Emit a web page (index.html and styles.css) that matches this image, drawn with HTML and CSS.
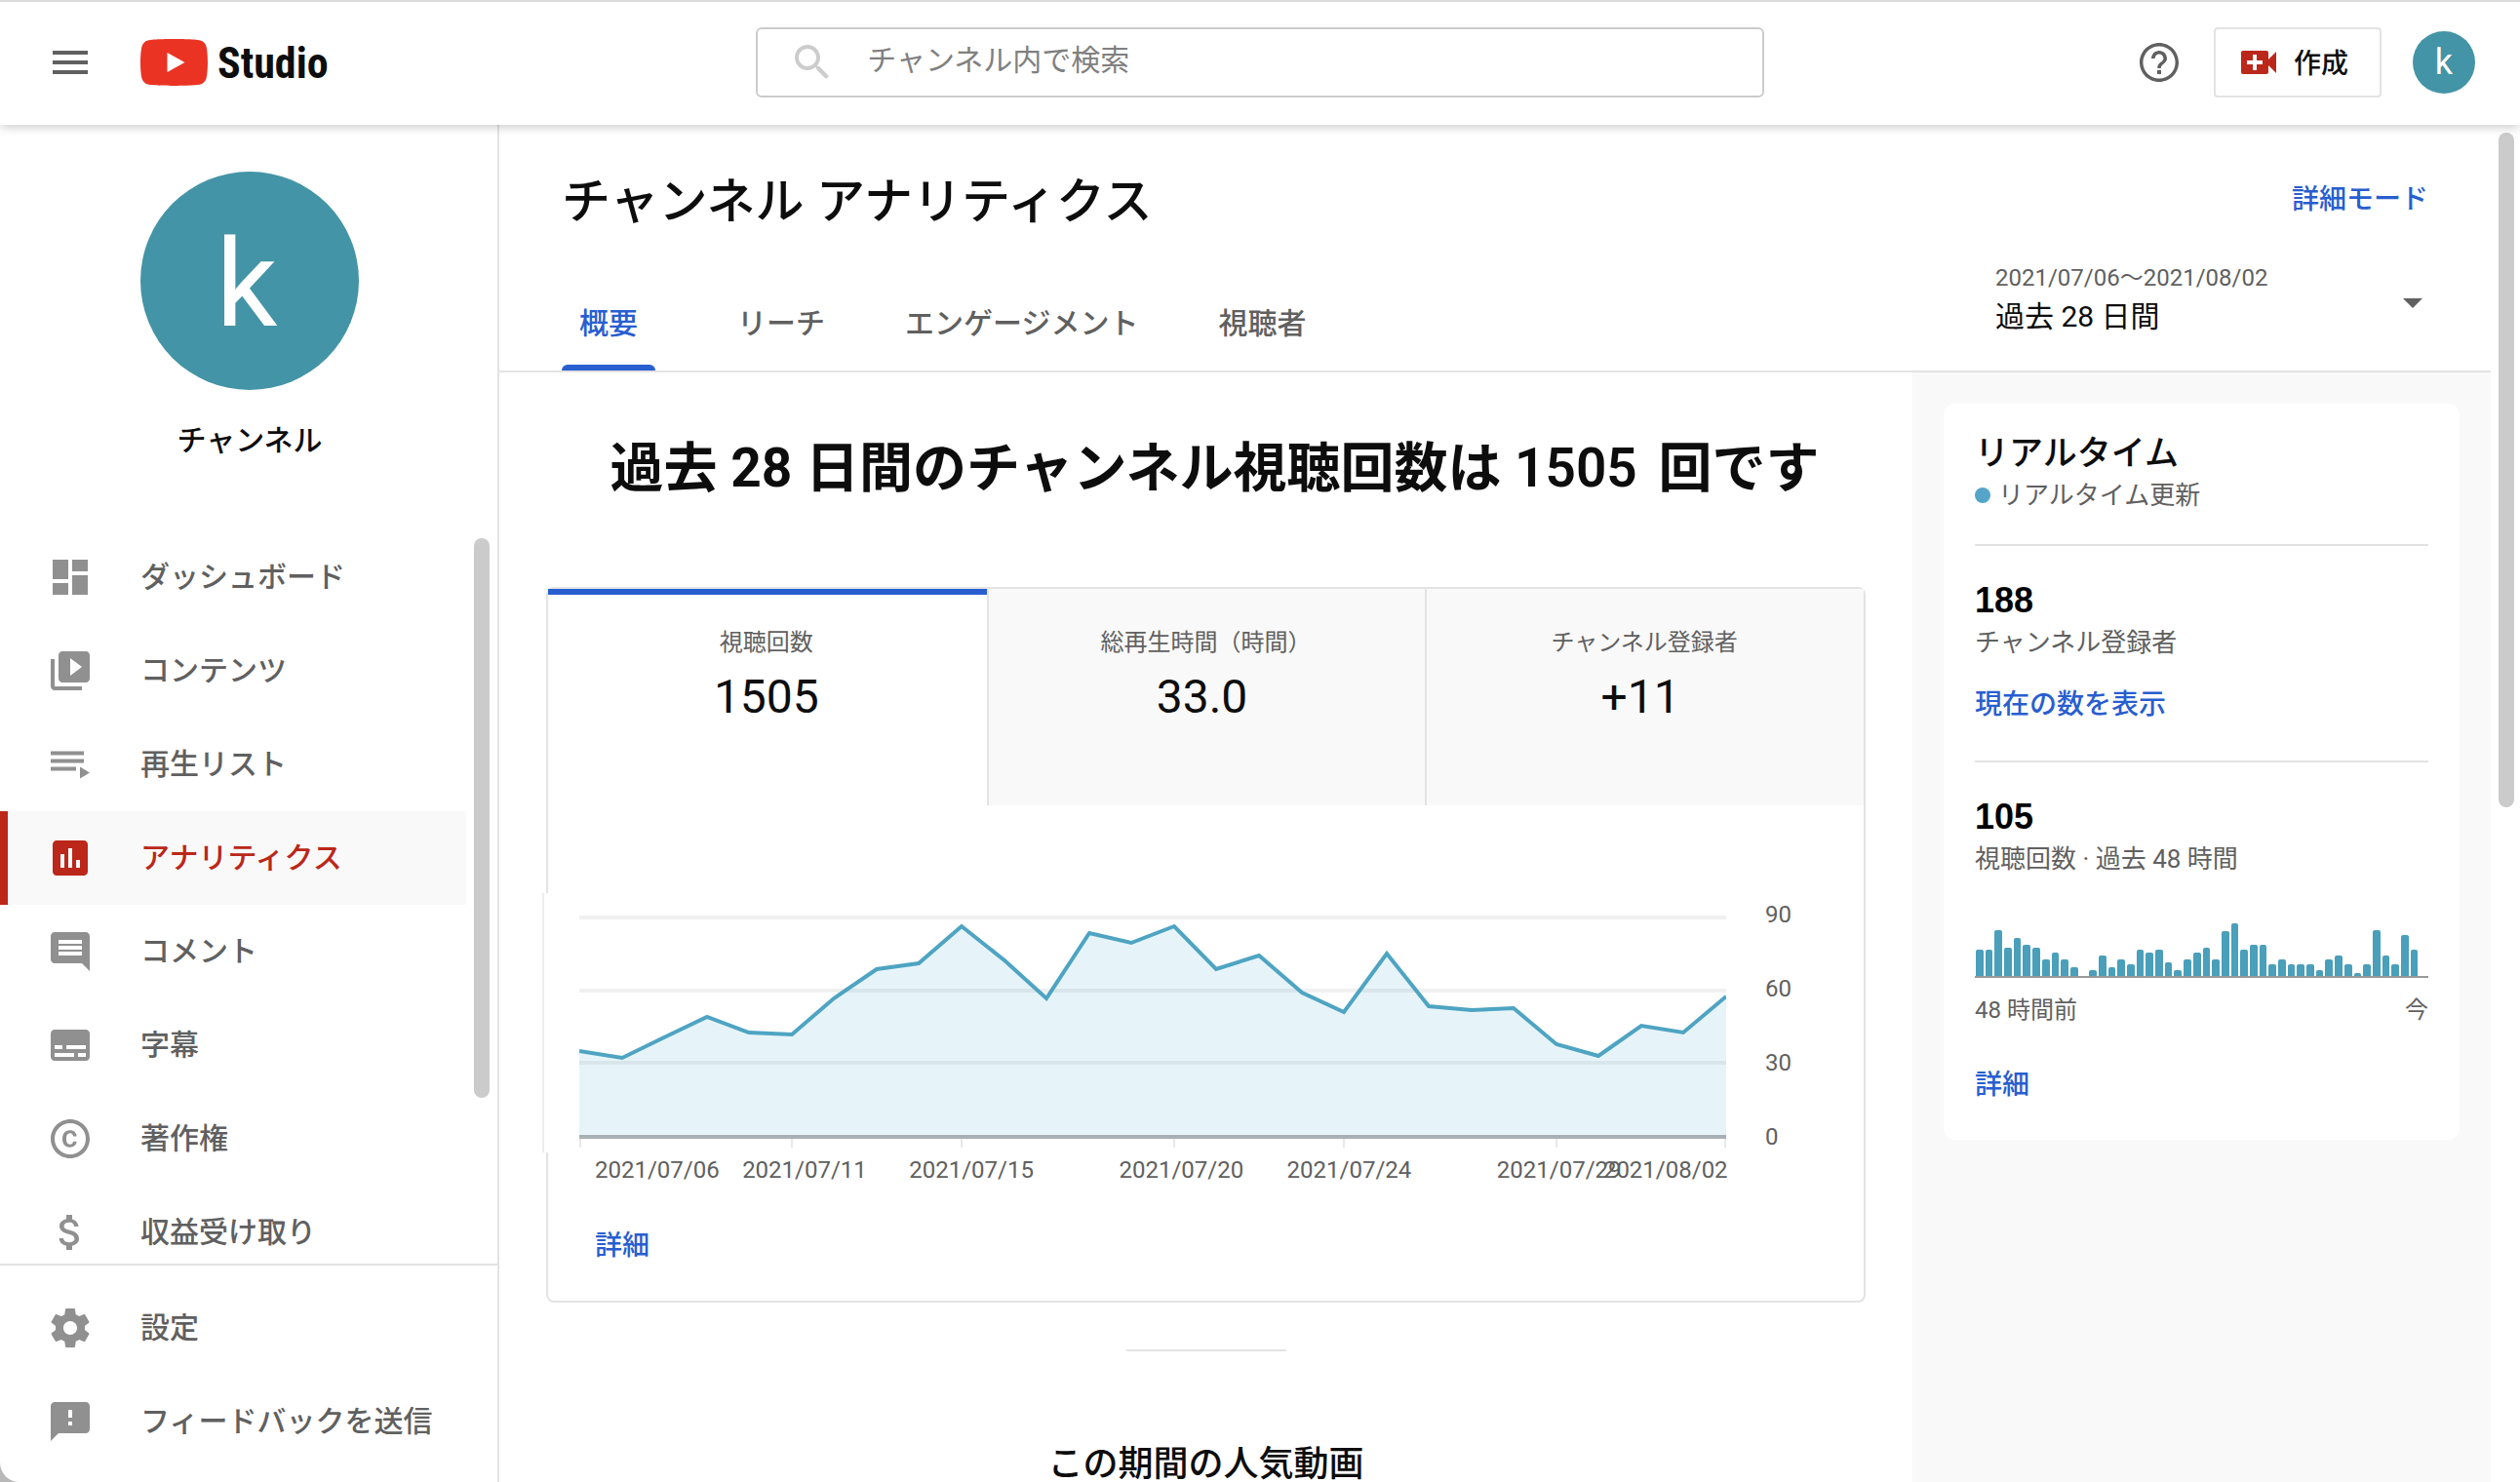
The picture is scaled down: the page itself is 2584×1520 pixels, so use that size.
FILE: index.html
```html
<!DOCTYPE html>
<html lang="ja">
<head>
<meta charset="utf-8">
<meta name="viewport" content="width=device-width, initial-scale=1">
<title>チャンネル アナリティクス - YouTube Studio</title>
<link rel="stylesheet" href="styles.css">
</head>
<body>
<div class="app">
  <header class="topbar">
    <div class="topbar-start">
      <button class="icon-button" type="button" aria-label="メニュー">
        <svg class="icon icon-dark" viewBox="0 0 24 24"><path d="M3 18h18v-2H3v2zm0-5h18v-2H3v2zm0-7v2h18V6H3z"/></svg>
      </button>
      <a class="brand" href="#">
        <svg class="brand-mark" viewBox="0 0 69 48"><path fill="#ea3323" d="M67.500 7.500C66.700 4.500 64.400 2.200 61.500 1.400 56.100 0 34.500 0 34.500 0S12.900 0 7.500 1.400C4.600 2.200 2.300 4.500 1.500 7.500 0 12.900 0 24 0 24s0 11.100 1.500 16.500c.8 3 3.100 5.300 6 6.100C12.900 48 34.500 48 34.500 48s21.600 0 27-1.400c2.900-.8 5.200-3.100 6-6.100C69 35.100 69 24 69 24s0-11.100-1.500-16.500z"/><path fill="#fff" d="M27.500 14v20L45.500 24z"/></svg>
        <span class="brand-name">Studio</span>
      </a>
    </div>
    <form class="search" role="search">
      <svg class="icon icon-pale" viewBox="0 0 24 24"><path d="M15.500 14h-.79l-.28-.27C15.410 12.590 16 11.110 16 9.500 16 5.910 13.090 3 9.500 3S3 5.910 3 9.500 5.910 16 9.500 16c1.610 0 3.090-.59 4.230-1.570l.27.28v.79l5 4.990L20.490 19l-4.990-5zm-6 0C7.010 14 5 11.990 5 9.500S7.010 5 9.500 5 14 7.010 14 9.500 11.990 14 9.500 14z"/></svg>
      <input class="search-input" type="search" placeholder="チャンネル内で検索" aria-label="チャンネル内で検索">
    </form>
    <div class="topbar-end">
      <button class="icon-button" type="button" aria-label="ヘルプ">
        <svg class="icon icon-dark" viewBox="0 0 24 24"><path d="M11 18h2v-2h-2v2zm1-16C6.480 2 2 6.480 2 12s4.480 10 10 10 10-4.480 10-10S17.520 2 12 2zm0 18.300c-4.600 0-8.300-3.700-8.300-8.300S7.400 3.700 12 3.700s8.300 3.700 8.300 8.300-3.700 8.300-8.300 8.300zM12 6c-2.210 0-4 1.790-4 4h1.800c0-1.200 1-2.200 2.200-2.200s2.200 1 2.200 2.200c0 2-3.100 1.750-3.100 5h1.800c0-2.250 3.100-2.500 3.100-5 0-2.210-1.790-4-4-4z"/></svg>
      </button>
      <button class="create" type="button">
        <svg class="icon icon-red" viewBox="0 0 24 24"><path d="M17 10.500V7c0-.55-.45-1-1-1H4c-.55 0-1 .45-1 1v10c0 .55.45 1 1 1h12c.55 0 1-.45 1-1v-3.500l4 4v-11l-4 4zM14 13h-3v3H9v-3H6v-2h3V8h2v3h3v2z"/></svg>
        <span class="create-label">作成</span>
      </button>
      <button class="avatar avatar-small" type="button" aria-label="アカウント">k</button>
    </div>
  </header>

  <aside class="sidebar">
    <div class="channel">
      <div class="avatar avatar-large">k</div>
      <p class="channel-name">チャンネル</p>
    </div>
    <nav class="nav" aria-label="メニュー">
      <a class="nav-item" href="#"><svg class="icon" viewBox="0 0 24 24"><path d="M3 13h8V3H3v10zm0 8h8v-6H3v6zm10 0h8V11h-8v10zm0-18v6h8V3h-8z"/></svg><span>ダッシュボード</span></a>
      <a class="nav-item" href="#"><svg class="icon" viewBox="0 0 24 24"><path d="M4 6H2v14c0 1.100.9 2 2 2h14v-2H4V6zm16-4H8c-1.100 0-2 .9-2 2v12c0 1.100.9 2 2 2h12c1.100 0 2-.9 2-2V4c0-1.100-.9-2-2-2zm-8 12.500v-9l6 4.500-6 4.500z"/></svg><span>コンテンツ</span></a>
      <a class="nav-item" href="#"><svg class="icon" viewBox="0 0 24 24"><path d="M2 5.300h17v2H2zM2 9.300h17v2H2zM2 13.300h13v2H2zM17 13.300v6l5-3z"/></svg><span>再生リスト</span></a>
      <a class="nav-item nav-item-active" href="#" aria-current="page"><svg class="icon" viewBox="0 0 24 24"><path d="M19 3H5c-1.100 0-2 .9-2 2v14c0 1.100.9 2 2 2h14c1.100 0 2-.9 2-2V5c0-1.100-.9-2-2-2zM9 17H7v-7h2v7zm4 0h-2V7h2v10zm4 0h-2v-4h2v4z"/></svg><span>アナリティクス</span></a>
      <a class="nav-item" href="#"><svg class="icon" viewBox="0 0 24 24"><path d="M21.990 4c0-1.100-.89-2-1.990-2H4c-1.100 0-2 .9-2 2v12c0 1.100.9 2 2 2h14l4 4-.01-18zM18 14H6v-2h12v2zm0-3H6V9h12v2zm0-3H6V6h12v2z"/></svg><span>コメント</span></a>
      <a class="nav-item" href="#"><svg class="icon" viewBox="0 0 24 24"><path d="M20 4H4c-1.100 0-2 .9-2 2v12c0 1.100.9 2 2 2h16c1.100 0 2-.9 2-2V6c0-1.100-.9-2-2-2zM4 12h4v2H4v-2zm10 6H4v-2h10v2zm6 0h-4v-2h4v2zm0-4H10v-2h10v2z"/></svg><span>字幕</span></a>
      <a class="nav-item" href="#"><svg class="icon" viewBox="0 0 24 24"><path d="M10.080 10.860c.05-.33.160-.62.3-.87s.340-.46.590-.62c.24-.15.540-.22.910-.23.23.01.440.05.630.13.200.09.380.21.520.36s.25.33.34.53.130.42.140.64h1.790c-.02-.47-.11-.9-.28-1.290s-.4-.73-.7-1.010-.66-.5-1.080-.66-.88-.23-1.390-.23c-.65 0-1.220.11-1.700.34s-.88.53-1.200.92-.56.84-.71 1.360S8 11.290 8 11.870v.27c0 .58.080 1.120.23 1.640s.390.970.710 1.350.720.690 1.200.910c.48.220 1.050.34 1.700.34.470 0 .91-.08 1.320-.23s.770-.36 1.080-.63.560-.58.740-.94.290-.74.300-1.150h-1.790c-.01.21-.06.4-.15.580s-.21.330-.36.460-.32.230-.52.300c-.19.070-.39.090-.6.100-.36-.01-.66-.08-.89-.23-.25-.16-.45-.37-.59-.62s-.25-.55-.3-.88-.08-.67-.08-1v-.27c0-.35.030-.68.080-1.010zM12 2C6.480 2 2 6.480 2 12s4.480 10 10 10 10-4.480 10-10S17.520 2 12 2zm0 18c-4.410 0-8-3.590-8-8s3.590-8 8-8 8 3.590 8 8-3.590 8-8 8z"/></svg><span>著作権</span></a>
      <a class="nav-item" href="#"><svg class="icon" viewBox="0 0 24 24"><path d="M11.800 10.900c-2.270-.59-3-1.200-3-2.150 0-1.090 1.010-1.850 2.700-1.850 1.780 0 2.440.85 2.500 2.100h2.210c-.07-1.720-1.120-3.300-3.210-3.810V3h-3v2.160c-1.940.42-3.500 1.680-3.500 3.610 0 2.310 1.910 3.460 4.700 4.130 2.500.6 3 1.480 3 2.410 0 .69-.49 1.790-2.700 1.790-2.060 0-2.870-.92-2.980-2.100h-2.200c.12 2.190 1.760 3.420 3.680 3.830V21h3v-2.150c1.950-.37 3.500-1.500 3.500-3.550 0-2.840-2.430-3.810-4.700-4.400z"/></svg><span>収益受け取り</span></a>
    </nav>
    <nav class="nav-footer" aria-label="その他">
      <a class="nav-item" href="#"><svg class="icon" viewBox="0 0 24 24"><path d="M19.430 12.980c.04-.32.070-.64.070-.98s-.03-.66-.07-.98l2.110-1.650c.19-.15.240-.42.120-.64l-2-3.460c-.12-.22-.39-.3-.61-.22l-2.490 1c-.52-.4-1.080-.73-1.690-.98l-.38-2.650C14.460 2.180 14.250 2 14 2h-4c-.25 0-.46.18-.49.42l-.38 2.650c-.61.25-1.170.59-1.690.98l-2.490-1c-.23-.09-.49 0-.61.22l-2 3.460c-.13.22-.07.490.12.640l2.110 1.650c-.04.320-.07.650-.07.980s.03.660.07.980l-2.110 1.650c-.19.150-.24.420-.12.640l2 3.460c.12.220.39.300.61.220l2.490-1c.52.400 1.080.73 1.690.98l.38 2.650c.03.240.24.420.49.420h4c.25 0 .46-.18.490-.42l.38-2.650c.61-.25 1.170-.59 1.690-.98l2.490 1c.23.090.49 0 .61-.22l2-3.460c.12-.22.070-.49-.12-.64l-2.110-1.650zM12 15.500c-1.930 0-3.500-1.570-3.500-3.500s1.570-3.500 3.500-3.500 3.500 1.570 3.500 3.500-1.570 3.500-3.500 3.500z"/></svg><span>設定</span></a>
      <a class="nav-item" href="#"><svg class="icon" viewBox="0 0 24 24"><path d="M20 2H4c-1.100 0-1.990.9-1.990 2L2 22l4-4h14c1.100 0 2-.9 2-2V4c0-1.100-.9-2-2-2zm-7 12h-2v-2h2v2zm0-4h-2V6h2v4z"/></svg><span>フィードバックを送信</span></a>
    </nav>
    <span class="scroll-thumb scroll-thumb-nav"></span>
  </aside>

  <main class="page">
    <div class="page-head">
      <div class="page-head-main">
        <h1 class="page-title">チャンネル アナリティクス</h1>
        <div class="tabs" role="tablist">
          <button class="tab tab-active" type="button" role="tab" aria-selected="true">概要</button>
          <button class="tab" type="button" role="tab">リーチ</button>
          <button class="tab" type="button" role="tab">エンゲージメント</button>
          <button class="tab" type="button" role="tab">視聴者</button>
        </div>
      </div>
      <div class="page-head-side">
        <a class="link mode-link" href="#">詳細モード</a>
        <button class="period" type="button" aria-haspopup="listbox">
          <span class="period-text">
            <span class="period-dates">2021/07/06～2021/08/02</span>
            <span class="period-name">過去 28 日間</span>
          </span>
          <svg class="icon icon-dark period-arrow" viewBox="0 0 24 24"><path d="M7 10l5 5 5-5z"/></svg>
        </button>
      </div>
    </div>

    <div class="page-body">
      <section class="overview">
        <h2 class="headline">過去 28 日間のチャンネル視聴回数は <span class="headline-count">1505</span> 回です</h2>

        <div class="chart-card">
          <div class="metrics" role="tablist">
            <button class="metric metric-active" type="button" role="tab" aria-selected="true">
              <span class="metric-label">視聴回数</span>
              <span class="metric-value">1505</span>
            </button>
            <button class="metric" type="button" role="tab">
              <span class="metric-label">総再生時間（時間）</span>
              <span class="metric-value metric-value-trend">33.0</span>
            </button>
            <button class="metric" type="button" role="tab">
              <span class="metric-label">チャンネル登録者</span>
              <span class="metric-value metric-value-trend">+11</span>
            </button>
          </div>

          <div class="plot">
            <svg class="plot-area" viewBox="0 0 1176 253" preserveAspectRatio="none" role="img" aria-label="視聴回数の推移">
              <path class="plot-fill" d="M0 240V152L44 159 87 138 131 117 174 133 218 135 261 98 305 68 348 62 392 24 436 59 479 98 523 31 566 41 610 24 653 68 697 54 741 92 784 112 828 52 871 106 915 110 958 108 1002 145 1045 157 1089 126 1132 133 1176 96V240z"/>
              <path class="plot-grid" d="M0 15H1176M0 90H1176M0 164H1176"/>
              <path class="plot-tick" d="M1 241V251M218 241V251M392 241V251M610 241V251M784 241V251M1002 241V251M1175 241V251"/>
              <path class="plot-base" d="M0 240H1176"/>
              <path class="plot-line" d="M0 152L44 159 87 138 131 117 174 133 218 135 261 98 305 68 348 62 392 24 436 59 479 98 523 31 566 41 610 24 653 68 697 54 741 92 784 112 828 52 871 106 915 110 958 108 1002 145 1045 157 1089 126 1132 133 1176 96"/>
            </svg>
            <div class="plot-scale"><span>90</span><span>60</span><span>30</span><span>0</span></div>
          </div>
          <div class="plot-dates">
            <span>2021/07/06</span><span>2021/07/11</span><span>2021/07/15</span><span>2021/07/20</span><span>2021/07/24</span><span>2021/07/29</span><span>2021/08/02</span>
          </div>
          <a class="link card-link" href="#">詳細</a>
        </div>

        <hr class="section-rule">
        <h2 class="section-title">この期間の人気動画</h2>
      </section>

      <aside class="side">
        <section class="realtime">
          <h2 class="realtime-title">リアルタイム</h2>
          <p class="realtime-status">リアルタイム更新</p>
          <div class="realtime-block">
            <strong class="realtime-number">188</strong>
            <p class="realtime-label">チャンネル登録者</p>
            <a class="link" href="#">現在の数を表示</a>
          </div>
          <div class="realtime-block">
            <strong class="realtime-number">105</strong>
            <p class="realtime-label">視聴回数 · 過去 48 時間</p>
            <div class="bars" role="img" aria-label="過去 48 時間の視聴回数">
              <i style="height:27px"></i><i style="height:27px"></i><i style="height:47px"></i><i style="height:29px"></i><i style="height:39px"></i><i style="height:32px"></i><i style="height:29px"></i><i style="height:17px"></i><i style="height:24px"></i><i style="height:17px"></i><i style="height:9px"></i><i style="height:0px"></i><i style="height:6px"></i><i style="height:21px"></i><i style="height:9px"></i><i style="height:17px"></i><i style="height:12px"></i><i style="height:27px"></i><i style="height:24px"></i><i style="height:27px"></i><i style="height:14px"></i><i style="height:6px"></i><i style="height:17px"></i><i style="height:24px"></i><i style="height:29px"></i><i style="height:17px"></i><i style="height:46px"></i><i style="height:54px"></i><i style="height:27px"></i><i style="height:32px"></i><i style="height:32px"></i><i style="height:12px"></i><i style="height:17px"></i><i style="height:12px"></i><i style="height:12px"></i><i style="height:12px"></i><i style="height:6px"></i><i style="height:17px"></i><i style="height:21px"></i><i style="height:12px"></i><i style="height:3px"></i><i style="height:12px"></i><i style="height:47px"></i><i style="height:21px"></i><i style="height:12px"></i><i style="height:42px"></i><i style="height:27px"></i><i style="height:0px"></i>
            </div>
            <div class="bars-range"><span>48 時間前</span><span>今</span></div>
            <a class="link" href="#">詳細</a>
          </div>
        </section>
      </aside>
    </div>
    <span class="scroll-thumb scroll-thumb-page"></span>
  </main>
</div>
</body>
</html>
```
FILE: styles.css
```css
:root {
  --ink: #0d0d0d;
  --ink-soft: #606060;
  --icon: #909090;
  --line: #e3e3e3;
  --panel: #f9f9f9;
  --blue: #285ecf;
  --red: #bb271a;
  --teal: #4394a6;
}

* {
  box-sizing: border-box;
}

html {
  background: #b8b8b8;
}

body {
  margin: 0;
  color: var(--ink);
  font-family: Roboto, "Noto Sans CJK JP", sans-serif;
  font-size: 28px;
  line-height: 40px;
}

h1,
h2,
p {
  margin: 0;
}

a {
  color: inherit;
  text-decoration: none;
}

button {
  margin: 0;
  padding: 0;
  border: 0;
  background: none;
  color: inherit;
  font: inherit;
  cursor: pointer;
}

.app {
  display: grid;
  grid-template: 128px minmax(0, 1fr) / 512px minmax(0, 1fr);
  height: 100vh;
  overflow: hidden;
  border-bottom-left-radius: 20px;
  background: #fff;
}

.icon {
  flex: none;
  width: 48px;
  height: 48px;
  fill: var(--icon);
}

.icon-dark {
  fill: var(--ink-soft);
}

.icon-pale {
  fill: #ccc;
}

.icon-red {
  fill: var(--red);
}

.link {
  color: var(--blue);
  font-weight: 500;
}

/* Top bar */

.topbar {
  z-index: 2;
  grid-column: 1 / -1;
  display: grid;
  grid-template-columns: 30% 40% 30%;
  align-items: center;
  background: #fff;
  box-shadow: inset 0 2px #dcdcdc, 0 2px 10px rgba(0, 0, 0, 0.22);
}

.topbar-start,
.topbar-end {
  display: flex;
  align-items: center;
}

.topbar-start {
  gap: 48px;
  padding-left: 48px;
}

.topbar-end {
  justify-content: flex-end;
  gap: 32px;
  padding-right: 46px;
}

.icon-button {
  display: flex;
}

.brand {
  display: flex;
  align-items: center;
  gap: 10px;
}

.brand-mark {
  width: 69px;
  height: 48px;
}

.brand-name {
  padding-top: 2px;
  font-family: "Roboto Condensed", "Liberation Sans Narrow", Roboto, sans-serif;
  font-size: 44px;
  font-weight: 700;
  line-height: 48px;
}

.search {
  display: flex;
  align-items: center;
  gap: 32px;
  height: 72px;
  padding: 0 32px;
  border: 2px solid #ccc;
  border-radius: 6px;
}

.search-input {
  flex: 1;
  min-width: 0;
  padding: 0 0 4px;
  border: 0;
  outline: 0;
  background: none;
  color: var(--ink);
  font: inherit;
  font-size: 30px;
}

.search-input::placeholder {
  color: #808080;
}

.create {
  display: flex;
  align-items: center;
  gap: 12px;
  height: 72px;
  padding: 0 32px 0 20px;
  border: 2px solid var(--line);
  border-radius: 4px;
  font-weight: 500;
}

.create-label {
  padding-top: 4px;
}

.avatar {
  display: flex;
  align-items: center;
  justify-content: center;
  border-radius: 50%;
  background: var(--teal);
  color: #fff;
}

.avatar-small {
  width: 64px;
  height: 64px;
  font-size: 36px;
}

.avatar-large {
  width: 224px;
  height: 224px;
  padding: 8px 6px 0 0;
  font-size: 124px;
}

/* Sidebar */

.sidebar {
  position: relative;
  display: flex;
  flex-direction: column;
  border-right: 2px solid var(--line);
  font-size: 30px;
}

.channel {
  display: flex;
  flex-direction: column;
  align-items: center;
  gap: 32px;
  padding: 48px 0 72px 2px;
}

.channel-name {
  font-weight: 500;
}

.nav {
  flex: 1;
  min-height: 0;
  overflow: hidden;
}

.nav-footer {
  padding: 16px 0 14px;
  border-top: 2px solid var(--line);
}

.nav-item {
  display: flex;
  align-items: center;
  gap: 48px;
  height: 96px;
  margin-right: 32px;
  padding-left: 48px;
  color: var(--ink-soft);
  font-weight: 500;
  white-space: nowrap;
}

.nav-item-active {
  padding-left: 40px;
  border-left: 8px solid var(--red);
  background: var(--panel);
  color: var(--red);
}

.nav-item-active .icon {
  fill: var(--red);
}

.scroll-thumb {
  position: absolute;
  width: 16px;
  border-radius: 8px;
  background: #cbcbcb;
}

.scroll-thumb-nav {
  top: 424px;
  right: 8px;
  height: 574px;
}

.scroll-thumb-page {
  top: 8px;
  right: 6px;
  height: 692px;
}

/* Page heading */

.page {
  position: relative;
  display: flex;
  flex-direction: column;
  min-height: 0;
  padding-right: 30px;
}

.page-head {
  display: flex;
  justify-content: space-between;
  padding: 0 64px;
  border-bottom: 2px solid var(--line);
}

.page-title {
  padding-top: 49px;
  font-size: 50px;
  font-weight: 500;
  line-height: 60px;
}

.tabs {
  display: flex;
  gap: 46px;
  padding-top: 43px;
}

.tab {
  height: 100px;
  padding: 4px 18px 0;
  color: var(--ink-soft);
  font-size: 30px;
  font-weight: 500;
}

.tab-active {
  position: relative;
  margin-right: 20px;
  color: var(--blue);
}

.tab-active::after {
  content: "";
  position: absolute;
  right: 0;
  bottom: 0;
  left: 0;
  height: 6px;
  border-radius: 6px 6px 0 0;
  background: var(--blue);
}

.page-head-side {
  display: flex;
  flex-direction: column;
  gap: 40px;
  width: 444px;
  padding-top: 57px;
}

.mode-link {
  align-self: flex-end;
}

.period {
  display: flex;
  align-items: center;
  justify-content: space-between;
  margin-right: -8px;
  text-align: left;
}

.period-text {
  display: flex;
  flex-direction: column;
}

.period-arrow {
  margin-top: 10px;
}

.period-dates {
  color: var(--ink-soft);
  font-size: 24px;
}

.period-name {
  font-size: 30px;
}

/* Overview */

.page-body {
  display: grid;
  flex: 1;
  grid-template-columns: minmax(0, 1fr) 593px;
  min-height: 0;
  overflow: hidden;
}

.overview {
  padding: 66px 48px 0;
}

.headline {
  margin-bottom: 90px;
  padding-left: 18px;
  font-size: 55px;
  font-weight: 700;
  line-height: 64px;
  text-align: center;
  white-space: nowrap;
}

.headline-count {
  margin-right: 8px;
  font-weight: 600;
}

.chart-card {
  border: 2px solid var(--line);
  border-radius: 8px;
}

.metrics {
  display: grid;
  grid-template-columns: repeat(3, minmax(0, 1fr));
}

.metric {
  display: flex;
  flex-direction: column;
  align-items: center;
  height: 222px;
  padding: 35px 2px 0 0;
  border-left: 2px solid var(--line);
  background: var(--panel);
}

.metric-active {
  padding-top: 29px;
  border-top: 6px solid var(--blue);
  border-left: 0;
  background: none;
}

.metric-label {
  color: var(--ink-soft);
  font-size: 24px;
}

.metric-value {
  padding-top: 6px;
  font-size: 48px;
  line-height: 60px;
}

.metric-value-trend {
  padding-right: 8px;
}

.plot {
  display: grid;
  grid-template-columns: minmax(0, 1fr) 101px;
  column-gap: 40px;
  height: 266px;
  margin: 90px 0 6px -6px;
  padding: 10px 0 0 36px;
  border-left: 2px solid #ececec;
  background: #fff;
}

.plot-area {
  width: 100%;
  height: 253px;
}

.plot-area path {
  fill: none;
  stroke-width: 4px;
  vector-effect: non-scaling-stroke;
}

.plot-area .plot-fill {
  fill: #e6f4f9;
}

.plot-grid {
  stroke: rgba(0, 0, 0, 0.06);
}

.plot-area .plot-tick {
  stroke: #e8e8e8;
  stroke-width: 2px;
}

.plot-base {
  stroke: #a9b0b3;
}

.plot-line {
  stroke: #4ea4c2;
}

.plot-scale {
  display: flex;
  flex-direction: column;
  justify-content: space-between;
  height: 252px;
  color: var(--ink-soft);
  font-size: 24px;
  line-height: 24px;
}

.plot-dates {
  display: grid;
  grid-template-columns: minmax(0, 151fr) minmax(0, 171fr) minmax(0, 215fr) minmax(0, 172fr) minmax(0, 215fr) minmax(0, 109fr) minmax(0, 126fr);
  padding: 0 141px 0 48px;
  color: var(--ink-soft);
  font-size: 24px;
  line-height: 24px;
  white-space: nowrap;
}

.card-link {
  display: block;
  margin: 46px 48px 36px;
}

.section-rule {
  width: 164px;
  height: 2px;
  margin: 48px auto 92px;
  border: 0;
  background: var(--line);
}

.section-title {
  font-size: 36px;
  font-weight: 500;
  line-height: 48px;
  text-align: center;
}

/* Realtime */

.side {
  padding: 32px;
  background: var(--panel);
}

.realtime {
  padding: 30px 32px 36px;
  border-radius: 12px;
  background: #fff;
}

.realtime-title {
  font-size: 35px;
  font-weight: 500;
  line-height: 44px;
}

.realtime-status {
  display: flex;
  align-items: center;
  gap: 8px;
  padding-bottom: 30px;
  color: var(--ink-soft);
  font-size: 26px;
}

.realtime-status::before {
  content: "";
  width: 16px;
  height: 16px;
  border-radius: 50%;
  background: #55a5cb;
}

.realtime-block {
  padding-top: 34px;
  border-top: 2px solid var(--line);
}

.realtime-block .link {
  display: block;
  padding-bottom: 37px;
}

.realtime-block:last-child .link {
  padding-bottom: 0;
}

.realtime-number {
  display: block;
  color: #000;
  font-family: "Liberation Sans", sans-serif;
  font-size: 36px;
  font-weight: 700;
  line-height: 44px;
}

.realtime-label {
  padding: 1px 0 24px;
  color: var(--ink-soft);
  font-size: 26px;
}

.bars {
  display: flex;
  align-items: flex-end;
  height: 78px;
  border-bottom: 2px solid #999;
}

.bars i {
  flex: 1;
  margin: 0 1px;
  border-radius: 2px 2px 0 0;
  background: #4a9fba;
}

.bars-range {
  display: flex;
  justify-content: space-between;
  margin-bottom: 40px;
  padding-top: 16px;
  color: var(--ink-soft);
  font-size: 24px;
  line-height: 34px;
}
```
